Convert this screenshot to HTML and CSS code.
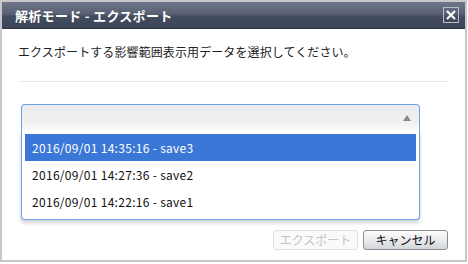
FILE: index.html
```html
<!DOCTYPE html>
<html lang="ja">
<head>
<meta charset="utf-8">
<link rel="stylesheet" href="styles.css">
</head>
<body>
<div class="dialog">
  <div class="titlebar">
    <span class="title">解析モード - エクスポート</span>
    <span class="close">
      <svg width="10" height="10" viewBox="0 0 10 10"><path d="M1 1L9 9M9 1L1 9" stroke="#fff" stroke-width="2.2" fill="none"/></svg>
    </span>
  </div>
  <div class="content">
    <p class="message">エクスポートする影響範囲表示用データを選択してください。</p>
    <div class="sep"></div>
    <div class="combo">
      <div class="select">
        <span class="arrow"></span>
      </div>
      <ul class="list">
        <li class="item selected">2016/09/01 14:35:16 - save3</li>
        <li class="item">2016/09/01 14:27:36 - save2</li>
        <li class="item">2016/09/01 14:22:16 - save1</li>
      </ul>
    </div>
  </div>
  <div class="buttons">
    <button class="btn disabled">エクスポート</button>
    <button class="btn">キャンセル</button>
  </div>
</div>
</body>
</html>
```
FILE: styles.css
```css
* { box-sizing: border-box; }
html, body { margin: 0; padding: 0; background: #fff; }
body {
  font-family: "Noto Sans CJK JP", "Liberation Sans", sans-serif;
  width: 468px;
  height: 264px;
  overflow: hidden;
}
.dialog {
  width: 467px;
  height: 262px;
  border: 2px solid #c8c8c8;
  background: #fff;
  display: flex;
  flex-direction: column;
  position: relative;
}
.titlebar {
  height: 27px;
  background: linear-gradient(#6f7588 0%, #5a6174 45%, #444c5f 55%, #3c4457 100%);
  border-bottom: 1px solid #2f3545;
  display: flex;
  align-items: center;
  justify-content: space-between;
  padding: 0 6px 0 13px;
}
.title {
  color: #fff;
  font-size: 13px;
  font-weight: bold;
  letter-spacing: 0.3px;
}
.close {
  width: 16px;
  height: 16px;
  border: 1px solid #b9bdc6;
  display: flex;
  align-items: center;
  justify-content: center;
}
.content {
  padding: 0 16px 0 16px;
  flex: 1;
}
.message {
  margin: 14px 0 0 0;
  font-size: 12px;
  line-height: 18px;
  letter-spacing: 0.1px;
  color: #222;
}
.sep {
  margin-top: 20px;
  height: 1px;
  background: #e9e9e9;
  width: 431px;
}
.combo {
  margin: 22px 0 0 3px;
  width: 399px;
  position: relative;
}
.select {
  height: 26px;
  border: 1px solid #6f9ee8;
  border-bottom: none;
  border-radius: 4px 4px 0 0;
  background: linear-gradient(#ececec 0%, #efefef 60%, #fafafa 100%);
  position: relative;
}
.arrow {
  position: absolute;
  right: 8px;
  top: 10px;
  width: 0;
  height: 0;
  border-left: 4px solid transparent;
  border-right: 4px solid transparent;
  border-bottom: 6px solid #8a8a8a;
}
.list {
  list-style: none;
  margin: 0;
  padding: 4px 3px 4px 3px;
  border: 1px solid #6f9ee8;
  border-top: none;
  border-radius: 0 0 4px 4px;
  background: #fff;
  box-shadow: 0 3px 4px rgba(0,0,0,0.18);
}
.item {
  height: 27px;
  line-height: 27px;
  padding-left: 7px;
  font-size: 12px;
  letter-spacing: 0.3px;
  color: #111;
}
.item.selected {
  background: #3a77d7;
  color: #fff;
}
.buttons {
  display: flex;
  justify-content: flex-end;
  gap: 5px;
  padding: 0 17px 10px 0;
}
.btn {
  font-family: "Noto Sans CJK JP", "Liberation Sans", sans-serif;
  font-size: 12px;
  height: 20px;
  width: 85px;
  padding: 0;
  line-height: 18px;
  border-radius: 3px;
  border: 1px solid #8a8e96;
  background: linear-gradient(#fdfdfd 0%, #e8e9ec 55%, #d2d5da 100%);
  color: #111;
}
.btn.disabled {
  border-color: #e0e0e0;
  background: #fafafa;
  color: #c4c4c4;
}
```
